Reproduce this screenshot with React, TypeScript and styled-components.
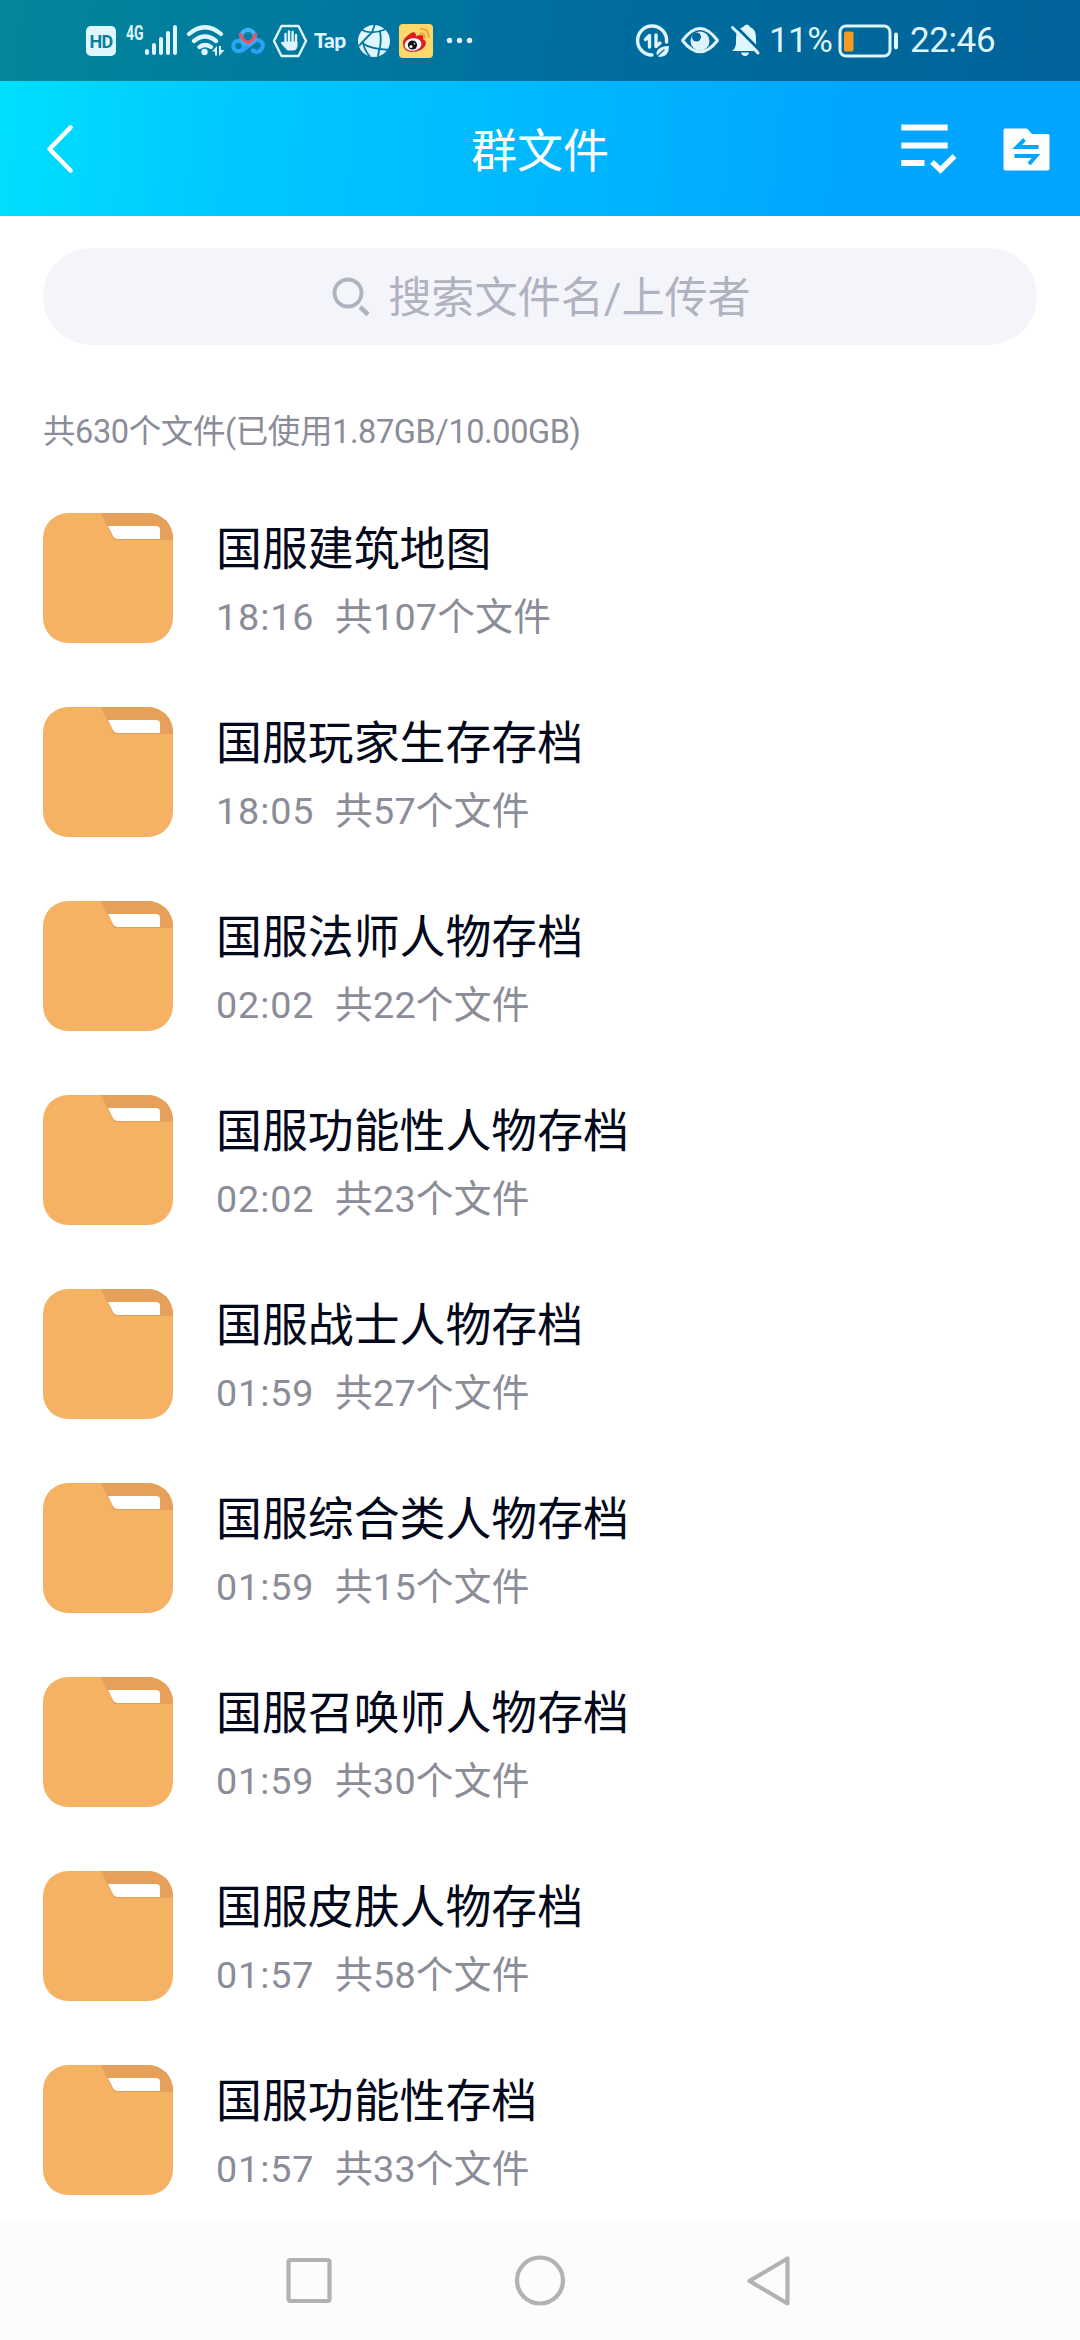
import React from "react";
import styled, { createGlobalStyle } from "styled-components";

const GlobalStyle = createGlobalStyle`
  * { box-sizing: border-box; }
  body { margin: 0; background: #fff; }
`;

const Screen = styled.div`
  width: 1080px;
  height: 2340px;
  display: flex;
  flex-direction: column;
  overflow: hidden;
  background: #fff;
  font-family: Roboto, "Noto Sans CJK SC", sans-serif;
`;

const StatusBar = styled.div`
  height: 81px;
  flex: none;
  display: flex;
  align-items: center;
  justify-content: space-between;
  padding: 0 85px 0 86px;
  color: #dff5ff;
  background: linear-gradient(97deg, #04869a 0%, #0078a0 30%, #006b9d 60%, #006399 100%);
`;

const StatusGroup = styled.div`
  height: 40px;
  display: flex;
  align-items: center;
`;

const StatusSvg = styled.svg<{ $gap?: number }>`
  display: block;
  flex: none;
  margin-left: ${(p) => p.$gap ?? 0}px;
`;

const HdBadge = styled.div`
  width: 30px;
  height: 30px;
  border-radius: 5px;
  background: #dff5ff;
  color: #0a7f9c;
  font: 700 18px/31px Roboto, sans-serif;
  text-align: center;
  letter-spacing: -0.8px;
`;

const NetworkLabel = styled.span`
  align-self: flex-start;
  width: 17px;
  margin: 2px 0 0 10px;
  font: 700 20px/20px Roboto, sans-serif;
  transform: scaleX(0.7);
  transform-origin: left center;
`;

const TapLabel = styled.span`
  width: 36px;
  margin-left: 6px;
  font: 900 21px/24px Lato, sans-serif;
  letter-spacing: -0.4px;
  transform: translateY(-1px);
`;

const StatusText = styled.span<{ $width: number; $gap: number; $spacing: number }>`
  width: ${(p) => p.$width}px;
  margin-left: ${(p) => p.$gap}px;
  padding-top: 1px;
  font: 400 35px/40px Roboto, sans-serif;
  letter-spacing: ${(p) => p.$spacing}px;
  white-space: nowrap;
`;

const Header = styled.header`
  height: 135px;
  flex: none;
  display: grid;
  grid-template-columns: 1fr auto 1fr;
  align-items: center;
  padding: 0 29px 0 44px;
  color: #fff;
  background: linear-gradient(95deg, #00dfff 0%, #00c8ff 22%, #00b7ff 52%, #00a6ff 78%, #00a5ff 100%);
`;

const HeaderTitle = styled.h1`
  margin: 4px 15px 0 0;
  font-size: 46px;
  font-weight: 400;
  line-height: 60px;
`;

const HeaderActions = styled.div`
  display: flex;
  justify-content: flex-end;
  align-items: center;
  gap: 46px;
`;

const Icon = styled.svg`
  display: block;
  flex: none;
`;

const SearchBox = styled.div`
  height: 97px;
  flex: none;
  margin: 32px 43px 0;
  padding-left: 3px;
  border-radius: 49px;
  display: flex;
  align-items: center;
  justify-content: center;
  gap: 18px;
  background: #f4f5fa;
  color: #b0b3bf;
  font-size: 43.2px;
  line-height: 60px;
`;

const SearchHint = styled.span`
  padding-top: 5px;
  letter-spacing: -0.1px;
`;

const Summary = styled.p`
  margin: 62px 0 0 43px;
  height: 50px;
  font-size: 32.5px;
  line-height: 50px;
  letter-spacing: -0.4px;
  color: #8a8c98;
  white-space: nowrap;
`;

const FileList = styled.ul`
  list-style: none;
  flex: 1;
  min-height: 0;
  margin: 56px 0 0;
  padding: 0 43px;
  display: flex;
  flex-direction: column;
  gap: 64px;
`;

const FileRow = styled.li`
  height: 130px;
  flex: none;
  display: flex;
  gap: 43px;
`;

const FileText = styled.div`
  display: flex;
  flex-direction: column;
`;

const FileName = styled.span`
  margin-top: 6px;
  font-size: 45.9px;
  line-height: 60px;
  color: #03081a;
  white-space: nowrap;
`;

const FileMeta = styled.span`
  display: flex;
  margin-top: 13px;
  font-size: 37.7px;
  line-height: 50px;
  color: #8a8c98;
  white-space: nowrap;
`;

const FileTime = styled.span`
  width: 119px;
  letter-spacing: 0.9px;
`;

const FileCount = styled.span`
  letter-spacing: 0.25px;
`;

const NavBar = styled.nav`
  height: 119px;
  flex: none;
  display: flex;
  align-items: center;
  justify-content: center;
  gap: 179px;
  background: #fcfcfc;
`;

const FolderIcon = () => (
  <Icon width="130" height="130" viewBox="0 0 130 130">
    <rect width="130" height="130" rx="25" fill="#f5b263" />
    <path d="M58 0H105A25 25 0 0 1 130 25V27H71Z" fill="#e6a05a" />
    <path d="M65 13H113Q117 13 117 17V26H75Q71.500 26 70 23Z" fill="#fff" />
  </Icon>
);

const SignalIcon = () => (
  <StatusSvg $gap={0} width="36" height="40" viewBox="142 21 36 40" stroke="currentColor" strokeWidth="4" strokeLinecap="round">
    <path d="M146 51V53M153 45V53M160 39V53M167 33V53M174 27V53" />
  </StatusSvg>
);

const WifiIcon = () => (
  <StatusSvg $gap={7} width="39" height="40" viewBox="185 21 39 40" fill="none" stroke="currentColor" strokeWidth="4.200" strokeLinecap="round">
    <path d="M188 34Q204 20.500 220 34M193 41Q204 32 215 41M198.500 47Q204 43 210 47" />
    <circle cx="203.500" cy="52" r="3.200" fill="currentColor" stroke="none" />
    <path d="M211 51.500L216 46V55.500H214V51.500ZM218 46H220V50H223.500L218 56Z" fill="currentColor" stroke="none" />
  </StatusSvg>
);

const CloudIcon = () => (
  <StatusSvg $gap={6} width="34" height="40" viewBox="230 21 34 40" fill="none" strokeWidth="4.200" strokeLinecap="round">
    <circle cx="237.500" cy="46" r="5.200" stroke="#27a8f4" />
    <path d="M252 50.500Q257 54 260 49.500A5.300 5.300 0 0 0 253 41.500L242 50" stroke="#2f9ff5" />
    <circle cx="247" cy="36.500" r="6.700" stroke="#3fb6f2" />
    <path d="M239.500 34.500Q242 41.500 247 42.500Q252 41.500 254.500 34.500" stroke="#e2566f" strokeWidth="3.500" />
  </StatusSvg>
);

const HandIcon = () => (
  <StatusSvg $gap={7} width="36" height="40" viewBox="271 21 36 40" fill="none" stroke="currentColor" strokeLinecap="round" strokeLinejoin="round">
    <path d="M280.500 26H297.500L305 41L297.500 56H280.500L273 41Z" strokeWidth="2.400" />
    <path d="M284.500 34V43M288 31.500V43M291.600 32V43M295 35V45" strokeWidth="2.400" />
    <path d="M283.500 42H296V45Q296 50 292.500 50H286.500Q283.500 47 280.500 43.500Q280 41 283.500 43Z" fill="currentColor" strokeWidth="1" />
  </StatusSvg>
);

const BallIcon = () => (
  <StatusSvg $gap={7} width="34" height="40" viewBox="356 21 34 40">
    <circle cx="373" cy="41" r="16" fill="currentColor" />
    <path d="M361 30Q370 35 384 29.500M371 32.500Q363 40 358 46M379 31.500Q381 41 378 51M361 43Q369 49 389 50M362 42Q363 50 369 56.500M374 24L371 32.500M378 50L377 57" fill="none" stroke="#0077a0" strokeWidth="1.800" />
  </StatusSvg>
);

const WeiboIcon = () => (
  <StatusSvg $gap={8} width="34" height="40" viewBox="398 21 34 40">
    <rect x="398" y="24" width="34" height="34" rx="4" fill="#fcd968" />
    <path d="M402 44Q401 38 411 32.500Q415 31 415 36Q424 33 422 39Q426 41 424.500 45Q421 52 411 52Q402 51 402 44Z" fill="#dc1f25" />
    <ellipse cx="412" cy="44.500" rx="8.500" ry="6.200" fill="#fff" transform="rotate(-8 412 44.500)" />
    <circle cx="411.500" cy="45" r="4.600" fill="#111" />
    <circle cx="410" cy="46.500" r="1.500" fill="#fff" />
    <circle cx="413.500" cy="43.800" r="0.800" fill="#fff" />
    <path d="M420 29Q428 28.500 427.500 37M419.500 33.500Q424 33 423.500 38" fill="none" stroke="#eda23b" strokeWidth="2.100" strokeLinecap="round" />
  </StatusSvg>
);

const MoreIcon = () => (
  <StatusSvg $gap={12} width="30" height="40" viewBox="444 21 30 40" fill="currentColor">
    <circle cx="448.500" cy="40.500" r="2.700" />
    <circle cx="458.500" cy="40.500" r="2.700" />
    <circle cx="468.500" cy="40.500" r="2.700" />
  </StatusSvg>
);

const DataSaverIcon = () => (
  <StatusSvg width="36" height="40" viewBox="634 21 36 40" fill="none" stroke="currentColor" strokeWidth="3.400" strokeLinecap="round">
    <path d="M651 55A14.500 14.500 0 1 1 665.500 42" />
    <path d="M644.500 39.500L648.500 35.500V47M655 35V46.500L659 43" strokeLinejoin="round" />
    <path d="M668 46Q668 57 659 57Q654 56 656 51Q659 46 668 46Z" fill="currentColor" stroke="none" />
    <path d="M655 57L663 50" stroke="#00699d" strokeWidth="1.300" />
  </StatusSvg>
);

const EyeIcon = () => (
  <StatusSvg $gap={9} width="40" height="40" viewBox="679 21 40 40" fill="none" stroke="currentColor">
    <path d="M681.500 40.500Q699 16.500 716.500 40.500Q699 63 681.500 40.500Z" strokeWidth="3" strokeLinejoin="round" />
    <circle cx="699" cy="41" r="9.500" fill="currentColor" stroke="none" />
    <circle cx="695.500" cy="37" r="4.500" fill="#00679c" stroke="none" />
  </StatusSvg>
);

const MutedBellIcon = () => (
  <StatusSvg $gap={10} width="32" height="40" viewBox="729 21 32 40">
    <path d="M731 51Q735 48 735 43V38Q735 29 742 27Q744 24.500 746 24.500T749 27Q755 29 755 38V43Q755 48 758 51Z" fill="currentColor" />
    <path d="M740 52.500H748Q747 56 744 56T740 52.500Z" fill="currentColor" />
    <path d="M734 25.500L760 51.500" stroke="#00679c" strokeWidth="3" />
    <path d="M731.500 27.500L757 53" stroke="currentColor" strokeWidth="3" strokeLinecap="round" />
  </StatusSvg>
);

const BatteryIcon = () => (
  <StatusSvg $gap={7} width="62" height="40" viewBox="837 20.500 62 40">
    <rect x="839" y="25.500" width="50" height="30" rx="6" fill="none" stroke="currentColor" strokeWidth="3" />
    <rect x="843" y="31" width="9.500" height="20" rx="2" fill="#f59a23" />
    <rect x="893" y="32" width="4" height="17" rx="2" fill="currentColor" />
  </StatusSvg>
);

const folders: { name: string; time: string; count: number }[] = [
  { name: "国服建筑地图", time: "18:16", count: 107 },
  { name: "国服玩家生存存档", time: "18:05", count: 57 },
  { name: "国服法师人物存档", time: "02:02", count: 22 },
  { name: "国服功能性人物存档", time: "02:02", count: 23 },
  { name: "国服战士人物存档", time: "01:59", count: 27 },
  { name: "国服综合类人物存档", time: "01:59", count: 15 },
  { name: "国服召唤师人物存档", time: "01:59", count: 30 },
  { name: "国服皮肤人物存档", time: "01:57", count: 58 },
  { name: "国服功能性存档", time: "01:57", count: 33 },
];

export default function App() {
  return (
    <Screen>
      <GlobalStyle />
      <StatusBar>
        <StatusGroup>
          <HdBadge>HD</HdBadge>
          <NetworkLabel>4G</NetworkLabel>
          <SignalIcon />
          <WifiIcon />
          <CloudIcon />
          <HandIcon />
          <TapLabel>Tap</TapLabel>
          <BallIcon />
          <WeiboIcon />
          <MoreIcon />
        </StatusGroup>
        <StatusGroup>
          <DataSaverIcon />
          <EyeIcon />
          <MutedBellIcon />
          <StatusText $width={62} $gap={7} $spacing={-0.6}>11%</StatusText>
          <BatteryIcon />
          <StatusText $width={85} $gap={10} $spacing={-0.4}>22:46</StatusText>
        </StatusGroup>
      </StatusBar>

      <Header>
        <Icon width="32" height="54" viewBox="44 121 32 54" fill="none" stroke="#fff" strokeWidth="4.600" strokeLinecap="round" strokeLinejoin="round">
          <path d="M70.500 126.500L49.500 148L70.500 169.500" />
        </Icon>
        <HeaderTitle>群文件</HeaderTitle>
        <HeaderActions>
          <Icon width="56" height="54" viewBox="900 121.500 56 54" fill="none" stroke="#fff" strokeWidth="6">
            <path d="M900.300 127H946.700M900.300 145H946.700M900.300 162.500H923.500" />
            <path d="M931 161.500L939.500 169.500L953.500 155.500" strokeWidth="5.500" />
          </Icon>
          <Icon width="48" height="48" viewBox="1002 126 48 48">
            <path d="M1004 129.500H1026L1031 135H1047Q1048.500 135 1048.500 137V169.500Q1048.500 171.500 1046.500 171.500H1004.500Q1002.500 171.500 1002.500 169.500V131.500Q1002.500 129.500 1004 129.500Z" fill="#fff" />
            <path d="M1037.500 148H1016L1023.500 140.500M1013.500 157H1035L1028 165" fill="none" stroke="#00a6ff" strokeWidth="4" />
          </Icon>
        </HeaderActions>
      </Header>

      <SearchBox>
        <Icon width="38" height="40" viewBox="333 277 38 40" fill="none" stroke="#b0b3bf" strokeWidth="3.800">
          <circle cx="349" cy="293" r="13.500" />
          <path d="M361 307L369 314.500" strokeWidth="4.500" />
        </Icon>
        <SearchHint>搜索文件名/上传者</SearchHint>
      </SearchBox>

      <Summary>共630个文件(已使用1.87GB/10.00GB)</Summary>

      <FileList>
        {folders.map((f) => (
          <FileRow key={f.name}>
            <FolderIcon />
            <FileText>
              <FileName>{f.name}</FileName>
              <FileMeta>
                <FileTime>{f.time}</FileTime>
                <FileCount>共{f.count}个文件</FileCount>
              </FileMeta>
            </FileText>
          </FileRow>
        ))}
      </FileList>

      <NavBar>
        <Icon width="52" height="52" viewBox="0 0 52 52" fill="none" stroke="#b2b2b2" strokeWidth="4.200">
          <rect x="5.500" y="5" width="41" height="41" rx="2" />
        </Icon>
        <Icon width="52" height="52" viewBox="0 0 52 52" fill="none" stroke="#b2b2b2" strokeWidth="4.200">
          <circle cx="26" cy="25.500" r="23" />
        </Icon>
        <Icon width="52" height="52" viewBox="745 2254 52 52" fill="none" stroke="#b2b2b2" strokeWidth="4.200" strokeLinejoin="round">
          <path d="M787.500 2257.500V2302.500L749.500 2280Z" />
        </Icon>
      </NavBar>
    </Screen>
  );
}
